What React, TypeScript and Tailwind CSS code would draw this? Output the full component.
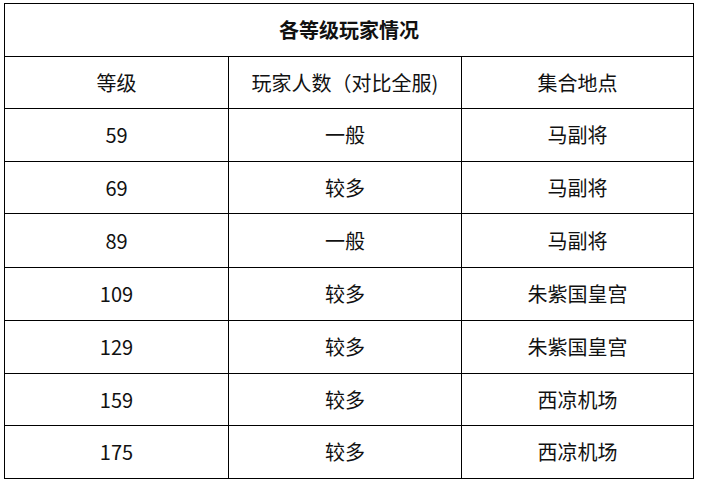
import React from "react";

const rows: [string, string, string][] = [
  ["59", "一般", "马副将"],
  ["69", "较多", "马副将"],
  ["89", "一般", "马副将"],
  ["109", "较多", "朱紫国皇宫"],
  ["129", "较多", "朱紫国皇宫"],
  ["159", "较多", "西凉机场"],
  ["175", "较多", "西凉机场"],
];

const heights = ["h-[53px]", "h-[53px]", "h-[52px]", "h-[54px]", "h-[53px]", "h-[53px]", "h-[52px]", "h-[53px]"];

export default function App() {
  return (
    <div
      className="w-[701px] h-[484px] bg-white pt-[3px] pl-[4px] text-[#111]"
      style={{ fontFamily: '"Noto Sans CJK SC", "Noto Sans", sans-serif' }}
    >
      <div className="w-[690px] border-l border-t border-black">
        <div className="h-[53px] border-r border-b border-black flex items-center justify-center text-[20px] font-bold">
          各等级玩家情况
        </div>
        <div className="grid grid-cols-[224px_233px_232px]">
          {["等级", "玩家人数（对比全服)", "集合地点"].map((t, i) => (
            <div key={i} className="h-[52px] border-r border-b border-black flex items-center justify-center text-[20px]">
              {t}
            </div>
          ))}
          {rows.map((r, ri) =>
            r.map((c, ci) => (
              <div
                key={`${ri}-${ci}`}
                className={`${heights[ri + 1] ?? "h-[53px]"} border-r border-b border-black flex items-center justify-center text-[20px]`}
              >
                {c}
              </div>
            ))
          )}
        </div>
      </div>
    </div>
  );
}
